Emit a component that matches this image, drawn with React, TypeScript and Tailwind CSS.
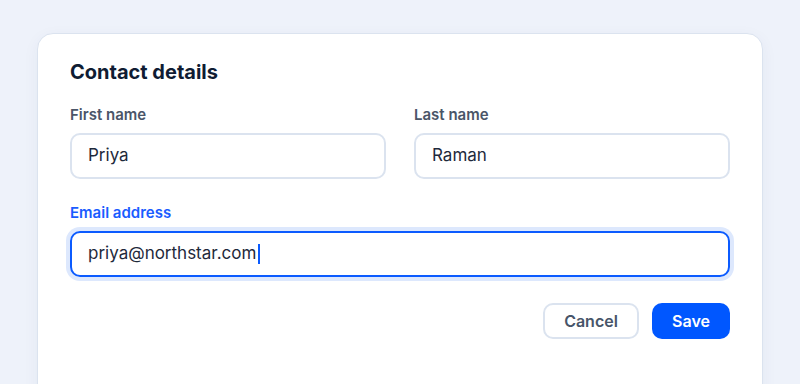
export default function App() {
  return (
    <div className="h-screen overflow-hidden bg-[#eef2fa] pt-[33px] font-['Inter',_'Noto_Sans',_sans-serif]">
      <div className="mx-auto h-[400px] w-[726px] rounded-2xl border border-[#dbe3ef] bg-white px-8 pt-6 shadow-[0_4px_16px_rgba(30,60,120,0.05)]">
        <h2 className="text-xl leading-7 font-bold text-[#0f1c33]">Contact details</h2>

        <div className="mt-[19px] grid grid-cols-2 gap-7">
          <div>
            <label className="block text-[15px] leading-5 font-semibold text-[#4a5568]">First name</label>
            <div className="mt-2 flex h-[46px] items-center rounded-[10px] border-2 border-[#dbe3ef] px-4 text-[17px] text-[#1e293b]">
              Priya
            </div>
          </div>
          <div>
            <label className="block text-[15px] leading-5 font-semibold text-[#4a5568]">Last name</label>
            <div className="mt-2 flex h-[46px] items-center rounded-[10px] border-2 border-[#dbe3ef] px-4 text-[17px] text-[#1e293b]">
              Raman
            </div>
          </div>
        </div>

        <div className="mt-6">
          <label className="block text-[15px] leading-5 font-semibold text-[#1a5cff]">Email address</label>
          <div className="mt-2 flex h-[46px] items-center rounded-[10px] border-2 border-[#0b5bff] px-4 text-[17px] text-[#1e293b] shadow-[0_0_0_4px_#dde8fd]">
            priya@northstar.com
            <span className="ml-[2px] inline-block h-[20px] w-[2px] bg-[#0b5bff]" />
          </div>
        </div>

        <div className="mt-[26px] flex justify-end gap-[13px]">
          <button className="h-9 w-[96px] rounded-[10px] border-2 border-[#dbe3ef] bg-white text-base font-semibold text-[#475569]">
            Cancel
          </button>
          <button className="h-9 w-[78px] rounded-[10px] bg-[#0057ff] text-base font-semibold text-white">
            Save
          </button>
        </div>
      </div>
    </div>
  );
}
